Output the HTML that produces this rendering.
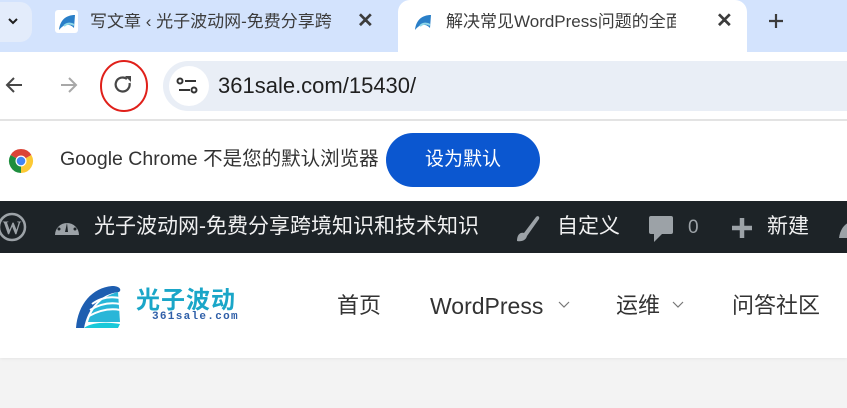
<!DOCTYPE html>
<html><head><meta charset="utf-8"><style>
*{margin:0;padding:0;box-sizing:border-box}
body{width:847px;height:408px;overflow:hidden;background:#f3f3f3;font-family:"Liberation Sans","Noto Sans CJK SC",sans-serif;position:relative}
.a{position:absolute}
.t{white-space:nowrap;line-height:1}
</style></head><body>
<div class="a" style="left:0;top:0;width:847px;height:52px;background:#d3e3fd"></div>
<div class="a" style="left:0;top:2px;width:32px;height:40px;background:#e3ecfb;border-radius:0 12px 12px 0"></div>
<svg class="a" style="left:6px;top:15px" width="14" height="12"><path d="M3 4l4 4 4-4" stroke="#1f1f1f" stroke-width="2" fill="none"/></svg>
<div class="a" style="left:55px;top:10px;width:23px;height:23px;background:#fff;border-radius:3px"></div>
<svg class="a" style="left:57px;top:12px" width="20" height="20"><path d="M2 18 C3 8 9 3 18 3 L17 16 C12 11 7 12 2 18Z" fill="#2a7fc8"/><path d="M7 14 C10 11 14 11 17 13" stroke="#8fd7e8" stroke-width="2" fill="none"/></svg>
<div class="a t" style="left:90px;top:13px;font-size:17px;color:#3c3c3c;width:250px;overflow:hidden">写文章 ‹ 光子波动网-免费分享跨</div>
<div class="a t" style="left:357px;top:11px;font-size:20px;color:#3c3c3c;font-weight:bold">✕</div>
<div class="a" style="left:398px;top:0;width:349px;height:52px;background:#fff;border-radius:12px 12px 0 0"></div>
<svg class="a" style="left:413px;top:12px" width="20" height="20"><path d="M2 18 C3 8 9 3 18 3 L17 16 C12 11 7 12 2 18Z" fill="#2a7fc8"/><path d="M7 14 C10 11 14 11 17 13" stroke="#8fd7e8" stroke-width="2" fill="none"/></svg>
<div class="a t" style="left:446px;top:13px;font-size:17px;color:#3c3c3c;width:230px;overflow:hidden">解决常见WordPress问题的全面</div>
<div class="a t" style="left:716px;top:11px;font-size:20px;color:#3c3c3c;font-weight:bold">✕</div>
<svg class="a" style="left:766px;top:11px" width="20" height="20"><path d="M10 3v14M3 10h14" stroke="#3c3c3c" stroke-width="2.2"/></svg>
<div class="a" style="left:0;top:52px;width:847px;height:68px;background:#fff"></div>
<svg class="a" style="left:4px;top:75px" width="22" height="20"><path d="M18 10H4M10 3l-7 7 7 7" stroke="#474747" stroke-width="2" fill="none"/></svg>
<svg class="a" style="left:58px;top:75px" width="22" height="20"><path d="M3 10h14M11 3l7 7-7 7" stroke="#a8a8a8" stroke-width="2" fill="none"/></svg>
<svg class="a" style="left:100px;top:58px" width="55" height="58"><ellipse cx="24" cy="28" rx="23" ry="25" stroke="#e0201a" stroke-width="2" fill="none"/><path d="M29.5 25 A7 7 0 1 1 27 21" stroke="#474747" stroke-width="2.2" fill="none"/><path d="M25 18h6v6z" fill="#474747"/></svg>
<div class="a" style="left:163px;top:61px;width:684px;height:50px;background:#e9eef6;border-radius:25px 0 0 25px"></div>
<div class="a" style="left:169px;top:66px;width:40px;height:40px;background:#fff;border-radius:20px"></div>
<svg class="a" style="left:176px;top:75px" width="24" height="22"><circle cx="4" cy="6" r="2.5" stroke="#333" stroke-width="2" fill="none"/><path d="M9 6h11M3 15h11" stroke="#333" stroke-width="2"/><circle cx="18" cy="15" r="2.5" stroke="#333" stroke-width="2" fill="none"/></svg>
<div class="a t" style="left:218px;top:75px;font-size:22px;color:#1f1f1f">361sale.com/15430/</div>
<div class="a" style="left:0;top:119px;width:847px;height:2px;background:#e3e3e3"></div>
<div class="a" style="left:0;top:121px;width:847px;height:80px;background:#fff"></div>
<svg class="a" style="left:8px;top:148px" width="26" height="26" viewBox="0 0 26 26"><path d="M13 13 L2.6 7 A12 12 0 0 1 23.4 7Z" fill="#db4437"/><path d="M13 13 L23.4 7 A12 12 0 0 1 13 25Z" fill="#fcc934"/><path d="M13 13 L13 25 A12 12 0 0 1 2.6 7Z" fill="#1e8e3e"/><circle cx="13" cy="13" r="5.5" fill="#fff"/><circle cx="13" cy="13" r="4.3" fill="#4285f4"/></svg>
<div class="a t" style="left:60px;top:150px;font-size:19.5px;color:#333">Google Chrome 不是您的默认浏览器</div>
<div class="a t" style="left:386px;top:133px;width:154px;height:54px;background:#0b57d0;border-radius:27px;color:#fff;font-size:19px;text-align:center;line-height:54px">设为默认</div>
<div class="a" style="left:0;top:201px;width:847px;height:52px;background:#1d2327"></div>
<svg class="a" style="left:-4px;top:211px" width="32" height="32"><circle cx="16" cy="16" r="13" stroke="#9ca2a7" stroke-width="2.5" fill="none"/><text x="16" y="23" font-family="Liberation Serif" font-weight="bold" font-size="19" fill="#9ca2a7" text-anchor="middle">W</text></svg>
<svg class="a" style="left:53px;top:213px" width="28" height="26"><path d="M2 22 A12 12 0 1 1 26 22Z" fill="#9ca2a7"/><path d="M14 10l-2 9h3z" fill="#1d2327"/><circle cx="6" cy="16" r="1.5" fill="#1d2327"/><circle cx="22" cy="16" r="1.5" fill="#1d2327"/><circle cx="9" cy="9" r="1.5" fill="#1d2327"/><circle cx="19" cy="9" r="1.5" fill="#1d2327"/></svg>
<div class="a t" style="left:94px;top:216px;font-size:21px;color:#f0f0f1">光子波动网-免费分享跨境知识和技术知识</div>
<svg class="a" style="left:514px;top:213px" width="28" height="30"><path d="M3 28 C3 22 6 19 10 20 L22 4 C24 2 26 4 25 6 L13 23 C12 27 8 29 3 28Z" fill="#9ca2a7"/></svg>
<div class="a t" style="left:557px;top:216px;font-size:21px;color:#f0f0f1">自定义</div>
<svg class="a" style="left:648px;top:214px" width="26" height="30"><path d="M3 2h20a2 2 0 0 1 2 2v14a2 2 0 0 1-2 2H14l-8 8v-8H3a2 2 0 0 1-2-2V4a2 2 0 0 1 2-2Z" fill="#9ca2a7"/></svg>
<div class="a t" style="left:688px;top:218px;font-size:19px;color:#9ca2a7">0</div>
<svg class="a" style="left:730px;top:216px" width="24" height="24"><path d="M12 2v20M2 12h20" stroke="#9ca2a7" stroke-width="4.5"/></svg>
<div class="a t" style="left:767px;top:216px;font-size:21px;color:#f0f0f1">新建</div>
<svg class="a" style="left:838px;top:214px" width="12" height="28"><path d="M1 24 C2 16 6 10 12 8 V24Z" fill="#9ca2a7"/></svg>
<div class="a" style="left:0;top:253px;width:847px;height:105px;background:#fff;box-shadow:0 1px 3px rgba(0,0,0,.06)"></div>
<svg class="a" style="left:74px;top:282px" width="52" height="50" viewBox="0 0 52 50"><path d="M2 46 C4 22 18 6 38 4 C46 4 48 8 45 10 C26 12 14 26 10 46Z" fill="#1e5eb0"/><path d="M14 40 C18 26 28 14 44 10 L46 40Z" fill="#29b6d8"/><path d="M18 22 C26 16 36 14 46 16 M16 28 C26 22 36 20 46 22 M15 34 C26 28 36 26 46 28" stroke="#fff" stroke-width="2" fill="none"/><path d="M10 46 C18 40 34 40 46 42 L44 46Z" fill="#19c9d9"/></svg>
<div class="a t" style="left:136px;top:289px;font-size:24px;font-weight:bold;color:#1aa6c8;letter-spacing:1px">光子波动</div>
<div class="a t" style="left:152px;top:312px;font-size:11px;font-weight:bold;color:#2f5fa8;letter-spacing:1.3px;font-family:'Liberation Mono',monospace">361sale.com</div>
<div class="a t" style="left:337px;top:295px;font-size:22px;color:#333">首页</div>
<div class="a t" style="left:430px;top:295px;font-size:23px;color:#333">WordPress</div>
<svg class="a" style="left:557px;top:300px" width="14" height="10"><path d="M2 2l5 5 5-5" stroke="#777" stroke-width="1.2" fill="none"/></svg>
<div class="a t" style="left:616px;top:295px;font-size:22px;color:#333">运维</div>
<svg class="a" style="left:671px;top:300px" width="14" height="10"><path d="M2 2l5 5 5-5" stroke="#777" stroke-width="1.2" fill="none"/></svg>
<div class="a t" style="left:732px;top:295px;font-size:22px;color:#333">问答社区</div>
</body></html>
